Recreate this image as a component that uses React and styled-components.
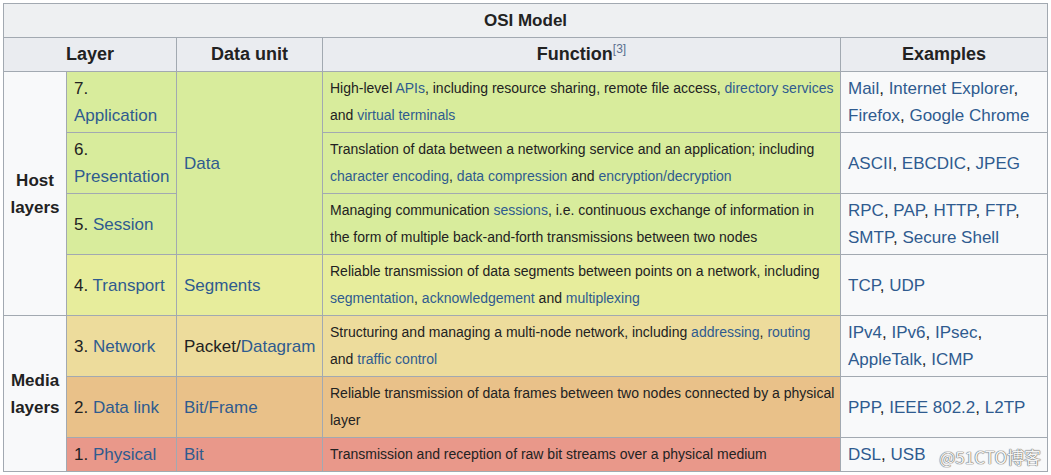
import React from "react";
import styled, { createGlobalStyle } from "styled-components";

const GlobalStyle = createGlobalStyle`
  body {
    margin: 0;
    background: #ffffff;
    font-family: "Liberation Sans", Arial, sans-serif;
    color: #222222;
  }
`;

const StyledWrapper = styled.div`
  position: relative;
  padding: 3px;
  width: 1045px;
`;

const StyledTable = styled.table`
  width: 1045px;
  table-layout: fixed;
  border-collapse: collapse;
  border: 1px solid #a2a9b1;
`;

const StyledCaption = styled.th`
  background: #eef0f2;
  border: 1px solid #a2a9b1;
  padding: 3px 7px;
  line-height: 27px;
  font-size: 17px;
  font-weight: 700;
  text-align: center;
`;

const StyledHeadCell = styled.th`
  background: #eaecf0;
  border: 1px solid #a2a9b1;
  padding: 3px 7px;
  line-height: 27px;
  font-size: 18px;
  font-weight: 700;
  text-align: center;
`;

const StyledGroupCell = styled.th`
  background: #f8f9fa;
  border: 1px solid #a2a9b1;
  padding: 3px 4px;
  line-height: 27px;
  font-size: 17px;
  font-weight: 700;
  text-align: center;
  vertical-align: middle;
`;

const StyledCell = styled.td`
  background: ${({ bg }) => bg || "#f8f9fa"};
  border: 1px solid #a2a9b1;
  padding: ${({ small }) => (small ? "3px 5px 3px 7px" : "3px 7px")};
  line-height: 27px;
  font-size: ${({ small }) => (small ? "14px" : "17px")};
  text-align: left;
  vertical-align: middle;
`;

const StyledLink = styled.span`
  color: #2f5b8f;
`;

const StyledSup = styled.sup`
  font-size: 12px;
  font-weight: 400;
  color: #5a6f8f;
  vertical-align: 7px;
  line-height: 0;
`;

const StyledWatermark = styled.div`
  position: absolute;
  right: 10px;
  bottom: 6px;
  font-family: "Noto Sans CJK SC", "Liberation Sans", sans-serif;
  font-size: 17px;
  color: #f4f4f4;
  text-shadow: 0 0 1px #6b6b6b, 0 0 1px #6b6b6b, 0 0 1px #6b6b6b;
`;

const L = ({ children }) => <StyledLink>{children}</StyledLink>;

const colors = {
  green: "#d8ec9c",
  transport: "#e7ed9c",
  network: "#eddc9c",
  link: "#e9c189",
  physical: "#e9988a",
};

const App = () => {
  return (
    <StyledWrapper>
      <GlobalStyle />
      <StyledTable>
        <colgroup>
          <col style={{ width: 63 }} />
          <col style={{ width: 110 }} />
          <col style={{ width: 146 }} />
          <col style={{ width: 518 }} />
          <col />
        </colgroup>
        <tbody>
          <tr>
            <StyledCaption colSpan={5}>OSI Model</StyledCaption>
          </tr>
          <tr>
            <StyledHeadCell colSpan={2}>Layer</StyledHeadCell>
            <StyledHeadCell>Data unit</StyledHeadCell>
            <StyledHeadCell>
              Function<StyledSup>[3]</StyledSup>
            </StyledHeadCell>
            <StyledHeadCell>Examples</StyledHeadCell>
          </tr>
          <tr>
            <StyledGroupCell rowSpan={4}>
              Host
              <br />
              layers
            </StyledGroupCell>
            <StyledCell bg={colors.green}>
              7.
              <br />
              <L>Application</L>
            </StyledCell>
            <StyledCell bg={colors.green} rowSpan={3}>
              <L>Data</L>
            </StyledCell>
            <StyledCell bg={colors.green} small>
              High-level <L>APIs</L>, including resource sharing, remote file
              access, <L>directory services</L> and <L>virtual terminals</L>
            </StyledCell>
            <StyledCell>
              <L>Mail</L>, <L>Internet Explorer</L>, <L>Firefox</L>,{" "}
              <L>Google Chrome</L>
            </StyledCell>
          </tr>
          <tr>
            <StyledCell bg={colors.green}>
              6.
              <br />
              <L>Presentation</L>
            </StyledCell>
            <StyledCell bg={colors.green} small>
              Translation of data between a networking service and an
              application; including <L>character encoding</L>,{" "}
              <L>data compression</L> and <L>encryption/decryption</L>
            </StyledCell>
            <StyledCell>
              <L>ASCII</L>, <L>EBCDIC</L>, <L>JPEG</L>
            </StyledCell>
          </tr>
          <tr>
            <StyledCell bg={colors.green}>
              5. <L>Session</L>
            </StyledCell>
            <StyledCell bg={colors.green} small>
              Managing communication <L>sessions</L>, i.e. continuous exchange
              of information in the form of multiple back-and-forth
              transmissions between two nodes
            </StyledCell>
            <StyledCell>
              <L>RPC</L>, <L>PAP</L>, <L>HTTP</L>, <L>FTP</L>, <L>SMTP</L>,{" "}
              <L>Secure Shell</L>
            </StyledCell>
          </tr>
          <tr>
            <StyledCell bg={colors.transport}>
              4. <L>Transport</L>
            </StyledCell>
            <StyledCell bg={colors.transport}>
              <L>Segments</L>
            </StyledCell>
            <StyledCell bg={colors.transport} small>
              Reliable transmission of data segments between points on a
              network, including <L>segmentation</L>,{" "}
              <L>acknowledgement</L> and <L>multiplexing</L>
            </StyledCell>
            <StyledCell>
              <L>TCP</L>, <L>UDP</L>
            </StyledCell>
          </tr>
          <tr>
            <StyledGroupCell rowSpan={3}>
              Media
              <br />
              layers
            </StyledGroupCell>
            <StyledCell bg={colors.network}>
              3. <L>Network</L>
            </StyledCell>
            <StyledCell bg={colors.network}>
              Packet/<L>Datagram</L>
            </StyledCell>
            <StyledCell bg={colors.network} small>
              Structuring and managing a multi-node network, including{" "}
              <L>addressing</L>, <L>routing</L> and <L>traffic control</L>
            </StyledCell>
            <StyledCell>
              <L>IPv4</L>, <L>IPv6</L>, <L>IPsec</L>, <L>AppleTalk</L>,{" "}
              <L>ICMP</L>
            </StyledCell>
          </tr>
          <tr>
            <StyledCell bg={colors.link}>
              2. <L>Data link</L>
            </StyledCell>
            <StyledCell bg={colors.link}>
              <L>Bit/Frame</L>
            </StyledCell>
            <StyledCell bg={colors.link} small>
              Reliable transmission of data frames between two nodes connected
              by a physical layer
            </StyledCell>
            <StyledCell>
              <L>PPP</L>, <L>IEEE 802.2</L>, <L>L2TP</L>
            </StyledCell>
          </tr>
          <tr>
            <StyledCell bg={colors.physical}>
              1. <L>Physical</L>
            </StyledCell>
            <StyledCell bg={colors.physical}>
              <L>Bit</L>
            </StyledCell>
            <StyledCell bg={colors.physical} small>
              Transmission and reception of raw bit streams over a physical
              medium
            </StyledCell>
            <StyledCell>
              <L>DSL</L>, <L>USB</L>
            </StyledCell>
          </tr>
        </tbody>
      </StyledTable>
      <StyledWatermark>@51CTO博客</StyledWatermark>
    </StyledWrapper>
  );
};

export default App;
